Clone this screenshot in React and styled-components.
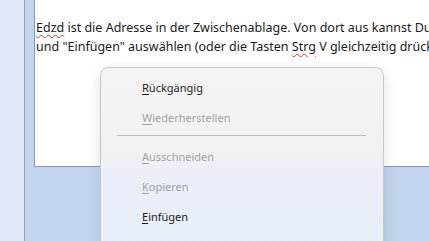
import React from 'react';
import styled, { createGlobalStyle } from 'styled-components';

const GlobalStyle = createGlobalStyle`
    html, body {
        margin: 0;
        padding: 0;
        width: 429px;
        height: 241px;
        overflow: hidden;
    }
    body {
        font-family: "Noto Sans", "Open Sans", sans-serif;
        background: #dfe9fa;
    }
`;

const Screen = styled.div`
    position: relative;
    display: flex;
    width: 429px;
    height: 241px;
    overflow: hidden;
`;

const Sidebar = styled.div`
    flex: 0 0 24px;
    background: #dee8f9;
    border-right: 1px solid #97a4b8;
`;

const Workspace = styled.div`
    flex: 1;
    min-width: 0;
    background: #c3d4ef;
    padding-left: 9px;
`;

const Page = styled.div`
    height: 167px;
    background: #ffffff;
    border-left: 1px solid #8c98ab;
    border-bottom: 1px solid #8c98ab;
    padding: 18px 0 0 1px;
    box-sizing: border-box;
    white-space: nowrap;
    overflow: hidden;
`;

const Line = styled.p`
    margin: 0;
    font-size: 12.5px;
    line-height: 19px;
    color: #1b1b1b;
`;

const Typo = styled.span`
    text-decoration: underline wavy #d23b3b;
    text-decoration-thickness: 1px;
    text-underline-offset: 2px;
`;

const Menu = styled.div`
    position: absolute;
    left: 100px;
    top: 67px;
    width: 284px;
    height: 190px;
    box-sizing: border-box;
    padding-top: 4px;
    border: 1px solid #c9c9c9;
    border-radius: 8px;
    background: linear-gradient(to bottom, #f3f3f3 0, #f2f2f3 78px, #e9eef8 118px, #e8eef9 100%);
    box-shadow: 0 4px 14px rgba(0, 0, 0, 0.12);
`;

const Item = styled.div`
    height: 30px;
    display: flex;
    align-items: center;
    padding-left: 41px;
    font-size: 11px;
    color: ${p => (p.disabled ? '#a2a2a2' : '#1c1c1c')};
`;

const Key = styled.span`
    text-decoration: underline;
    text-underline-offset: 2px;
`;

const Separator = styled.div`
    height: 1px;
    margin: 3px 17px 5px 16px;
    background: #bfbfbf;
`;

const MenuItem = ({ k, rest, disabled }) => (
    <Item disabled={disabled}>
        <span><Key>{k}</Key>{rest}</span>
    </Item>
);

const App = () => {
    return (
        <Screen>
            <GlobalStyle />
            <Sidebar />
            <Workspace>
                <Page>
                    <Line>
                        <Typo>Edzd</Typo> ist die Adresse in der Zwischenablage. Von dort aus kannst Du
                    </Line>
                    <Line>
                        und "Einfügen" auswählen (oder die Tasten <Typo>Strg</Typo> V gleichzeitig drücken)
                    </Line>
                </Page>
            </Workspace>
            <Menu>
                <MenuItem k="R" rest="ückgängig" />
                <MenuItem k="W" rest="iederherstellen" disabled />
                <Separator />
                <MenuItem k="A" rest="usschneiden" disabled />
                <MenuItem k="K" rest="opieren" disabled />
                <MenuItem k="E" rest="infügen" />
            </Menu>
        </Screen>
    );
};

export default App;
